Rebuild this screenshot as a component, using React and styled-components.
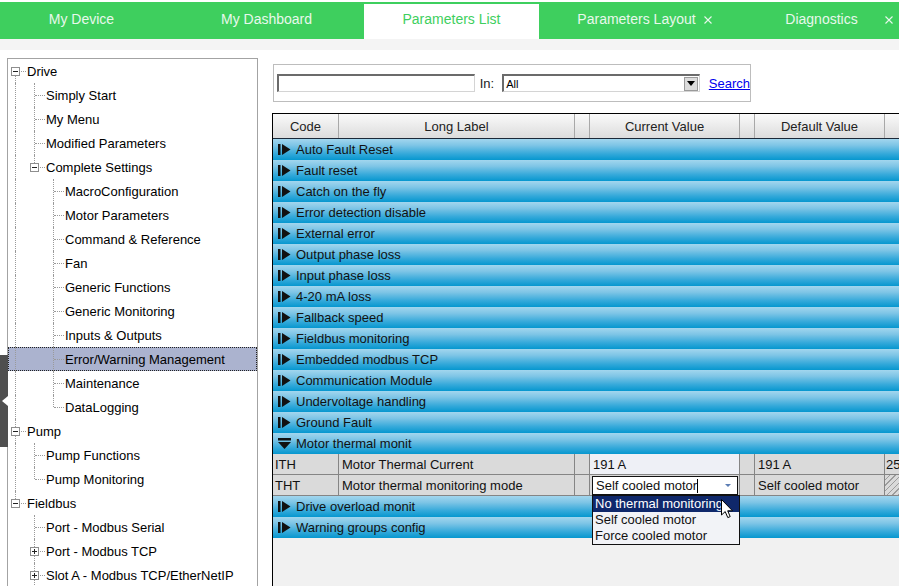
import styled, { createGlobalStyle, css } from "styled-components";

const GREEN = "#3ecf5e";
const COLS = "66px 236px 15px 150px 15px 130px 120px";

const GlobalStyle = createGlobalStyle`
  html, body {
    margin: 0;
    padding: 0;
    overflow: hidden;
    background: #fff;
    font-family: "Liberation Sans", Arial, sans-serif;
  }
  * { box-sizing: border-box; }
`;

const Page = styled.div`
  height: 100vh;
  display: flex;
  flex-direction: column;
`;

const TabBar = styled.div`
  margin-top: 2px;
  height: 37px;
  background: ${GREEN};
  display: flex;
  align-items: flex-end;
  gap: 10px;
  padding-left: 0;
  margin-left: -6px;
  flex-shrink: 0;
`;

const Tab = styled.div`
  flex: 0 0 175px;
  height: 35px;
  padding-bottom: 5px;
  display: flex;
  align-items: center;
  justify-content: center;
  position: relative;
  font-size: 14px;
  color: #e8f8ec;
  ${(p) =>
    p.$active &&
    css`
      background: #fff;
      color: ${GREEN};
    `}
`;

const TabText = styled.span`
  position: relative;
`;

const Close = styled.span`
  position: absolute;
  top: 50%;
  margin-top: -3px;
  display: flex;
  ${(p) =>
    p.$edge
      ? css`
          right: 16px;
          margin-top: -6px;
        `
      : css`
          left: calc(100% + 8px);
        `}
`;

const SubStrip = styled.div`
  height: 11px;
  background: #f4f4f4;
  flex-shrink: 0;
`;

const Body = styled.div`
  flex: 1;
  min-height: 0;
  display: flex;
  padding: 8px 0 0 7px;
  position: relative;
  overflow: hidden;
`;

const Handle = styled.div`
  position: absolute;
  left: 0;
  top: 305px;
  width: 8px;
  height: 92px;
  background: #4f4f4f;
  display: flex;
  align-items: center;
  justify-content: flex-end;
  &::after {
    content: "";
    border-right: 6px solid #fff;
    border-top: 5px solid transparent;
    border-bottom: 5px solid transparent;
  }
`;

const TreePanel = styled.div`
  flex: 0 0 251px;
  border: 1px solid #a3a3a3;
  border-bottom: none;
  background: #fff;
  overflow: hidden;
`;

const TreeRow = styled.div`
  height: 24px;
  display: flex;
  align-items: center;
  font-size: 13px;
  color: #000;
  white-space: nowrap;
  ${(p) =>
    p.$selected &&
    css`
      background: #abb3cf;
      outline: 1px dotted #222;
      outline-offset: -1px;
    `}
`;

const Guide = styled.div`
  flex: 0 0 19px;
  align-self: stretch;
  position: relative;
  &::before {
    content: "";
    position: absolute;
    left: 7px;
    top: ${(p) => (p.$up ? "0" : "12px")};
    bottom: ${(p) => (p.$down ? "0" : "12px")};
    border-left: 1px dotted #9a9a9a;
  }
  &::after {
    content: "";
    position: absolute;
    left: 8px;
    top: 12px;
    width: ${(p) => (p.$branch ? "10px" : "0")};
    border-top: 1px dotted #9a9a9a;
  }
`;

const Expander = styled.span`
  position: absolute;
  left: 3px;
  top: 8px;
  width: 9px;
  height: 9px;
  border: 1px solid #8e8e8e;
  background: #fff;
  z-index: 1;
  &::before {
    content: "";
    position: absolute;
    left: 1px;
    right: 1px;
    top: 3px;
    border-top: 1px solid #222;
  }
  ${(p) =>
    p.$plus &&
    css`
      &::after {
        content: "";
        position: absolute;
        top: 1px;
        bottom: 1px;
        left: 3px;
        border-left: 1px solid #222;
      }
    `}
`;

const RightCol = styled.div`
  flex: 1;
  min-width: 0;
  margin-left: 14px;
  display: flex;
  flex-direction: column;
  overflow: hidden;
`;

const SearchBox = styled.div`
  margin: 6px 0 0 1px;
  width: 478px;
  height: 38px;
  border: 1px solid #bdbdbd;
  display: flex;
  align-items: center;
  padding-left: 3px;
  font-size: 13px;
  flex-shrink: 0;
`;

const TextInput = styled.div`
  width: 198px;
  height: 18px;
  border-top: 2px solid #6b6b6b;
  border-left: 2px solid #6b6b6b;
  border-right: 1px solid #d4d4d4;
  border-bottom: 1px solid #d4d4d4;
  background: #fff;
`;

const InLabel = styled.span`
  margin-left: 5px;
  color: #222;
`;

const Select = styled.div`
  margin-left: 8px;
  width: 198px;
  height: 18px;
  border-top: 2px solid #6b6b6b;
  border-left: 2px solid #6b6b6b;
  border-right: 1px solid #d4d4d4;
  border-bottom: 1px solid #d4d4d4;
  display: flex;
  align-items: center;
  justify-content: space-between;
  font-size: 11px;
  padding-left: 2px;
  padding-right: 1px;
`;

const SelectButton = styled.span`
  width: 14px;
  height: 14px;
  background: #dcdcdc;
  border: 1px solid #9a9a9a;
  display: flex;
  align-items: center;
  justify-content: center;
  &::after {
    content: "";
    border-top: 5px solid #000;
    border-left: 4px solid transparent;
    border-right: 4px solid transparent;
  }
`;

const SearchLink = styled.a`
  margin-left: 9px;
  color: #0000ee;
  text-decoration: underline;
`;

const Table = styled.div`
  margin-top: 11px;
  flex: 1;
  border-top: 1px solid #000;
  border-left: 1px solid #000;
  background: #f1f1f1;
  font-size: 13px;
  color: #111;
  width: 760px;
`;

const HeaderRow = styled.div`
  display: grid;
  grid-template-columns: ${COLS};
  height: 25px;
  border-bottom: 1px solid #1b2838;
`;

const HeaderCell = styled.div`
  background: linear-gradient(#fafafa, #dcdcdc);
  border-right: 1px solid #a8a8a8;
  display: flex;
  align-items: center;
  justify-content: center;
  color: #222;
`;

const GroupRow = styled.div`
  height: 21px;
  display: flex;
  align-items: center;
  gap: 5px;
  padding-left: 5px;
  background: linear-gradient(#a2d6ee 0%, #7ec5e6 30%, #35a9da 70%, #0697cf 100%);
  color: #111;
`;

const ParamRow = styled.div`
  display: grid;
  grid-template-columns: ${COLS};
  height: 21px;
`;

const Cell = styled.div`
  position: relative;
  background: ${(p) => (p.$edit ? "#eef0f6" : "#dadada")};
  border-right: 1px solid #858585;
  border-bottom: 1px solid #858585;
  display: flex;
  align-items: center;
  padding-left: ${(p) => p.$pad ?? 3}px;
  white-space: nowrap;
  overflow: ${(p) => (p.$open ? "visible" : "hidden")};
  ${(p) =>
    p.$hatch &&
    css`
      background: repeating-linear-gradient(135deg, #dadada 0 3px, #9c9c9c 3px 4px);
    `}
`;

const Combo = styled.div`
  position: absolute;
  left: 2px;
  right: 1px;
  top: 1px;
  height: 19px;
  border: 1px solid #111;
  background: #fff;
  display: flex;
  align-items: center;
  padding: 0 6px 0 3px;
`;

const Caret = styled.span`
  display: inline-block;
  width: 1px;
  height: 14px;
  background: #000;
`;

const ComboArrow = styled.span`
  margin-left: auto;
  border-top: 3px solid #5b7db4;
  border-left: 3px solid transparent;
  border-right: 3px solid transparent;
`;

const DropList = styled.div`
  position: absolute;
  left: 2px;
  top: 20px;
  width: 148px;
  border: 1px solid #111;
  background: #f2f3f7;
  z-index: 5;
`;

const DropItem = styled.div`
  height: 16px;
  line-height: 16px;
  padding-left: 2px;
  color: ${(p) => (p.$sel ? "#fff" : "#111")};
  background: ${(p) => (p.$sel ? "#0f286b" : "transparent")};
`;

const Pointer = styled.svg`
  position: absolute;
  left: 128px;
  top: 3px;
`;

const tree = [
  {
    label: "Drive",
    children: [
      { label: "Simply Start" },
      { label: "My Menu" },
      { label: "Modified Parameters" },
      {
        label: "Complete Settings",
        children: [
          { label: "MacroConfiguration" },
          { label: "Motor Parameters" },
          { label: "Command & Reference" },
          { label: "Fan" },
          { label: "Generic Functions" },
          { label: "Generic Monitoring" },
          { label: "Inputs & Outputs" },
          { label: "Error/Warning Management", selected: true },
          { label: "Maintenance" },
          { label: "DataLogging" },
        ],
      },
    ],
  },
  {
    label: "Pump",
    children: [{ label: "Pump Functions" }, { label: "Pump Monitoring" }],
  },
  {
    label: "Fieldbus",
    children: [
      { label: "Port - Modbus Serial" },
      { label: "Port - Modbus TCP", collapsed: true },
      { label: "Slot A - Modbus TCP/EtherNetIP", collapsed: true, more: true },
    ],
  },
];

function flatten(nodes, depth, trail, out) {
  nodes.forEach((n, i) => {
    const last = i === nodes.length - 1 && !n.more;
    const first = depth === 0 && i === 0;
    out.push({ ...n, depth, trail, last, first });
    if (n.children) flatten(n.children, depth + 1, [...trail, !last], out);
  });
  return out;
}

const rows = flatten(tree, 0, [], []);

const groups = [
  "Auto Fault Reset",
  "Fault reset",
  "Catch on the fly",
  "Error detection disable",
  "External error",
  "Output phase loss",
  "Input phase loss",
  "4-20 mA loss",
  "Fallback speed",
  "Fieldbus monitoring",
  "Embedded modbus TCP",
  "Communication Module",
  "Undervoltage handling",
  "Ground Fault",
];

function GroupIcon({ open }) {
  return open ? (
    <svg width="13" height="11" viewBox="0 0 13 11">
      <rect x="0" y="0" width="13" height="2.5" fill="#111" />
      <polygon points="0,4 13,4 6.5,11" fill="#111" />
    </svg>
  ) : (
    <svg width="13" height="11" viewBox="0 0 13 11">
      <rect x="0" y="0" width="2.5" height="11" fill="#111" />
      <polygon points="4,0 12.5,5.5 4,11" fill="#111" />
    </svg>
  );
}

function CloseIcon() {
  return (
    <svg width="8" height="8" viewBox="0 0 8 8">
      <path d="M0.5 0.5 L7.5 7.5 M7.5 0.5 L0.5 7.5" stroke="#e8f8ec" strokeWidth="1.1" />
    </svg>
  );
}

function Tree() {
  return (
    <TreePanel>
      {rows.map((r) => (
        <TreeRow key={r.label} $selected={r.selected}>
          {r.trail.map((through, d) => (
            <Guide key={d} $up={through} $down={through} />
          ))}
          <Guide $up={!r.first} $down={!r.last} $branch>
            {(r.children || r.collapsed) && <Expander $plus={r.collapsed} />}
          </Guide>
          <span>{r.label}</span>
        </TreeRow>
      ))}
    </TreePanel>
  );
}

export default function App() {
  return (
    <Page>
      <GlobalStyle />
      <TabBar>
        <Tab><TabText>My Device</TabText></Tab>
        <Tab><TabText>My Dashboard</TabText></Tab>
        <Tab $active><TabText>Parameters List</TabText></Tab>
        <Tab>
          <TabText>
            Parameters Layout
            <Close><CloseIcon /></Close>
          </TabText>
        </Tab>
        <Tab>
          <TabText>Diagnostics</TabText>
          <Close $edge><CloseIcon /></Close>
        </Tab>
      </TabBar>
      <SubStrip />
      <Body>
        <Handle />
        <Tree />
        <RightCol>
          <SearchBox>
            <TextInput />
            <InLabel>In:</InLabel>
            <Select>
              <span>All</span>
              <SelectButton />
            </Select>
            <SearchLink href="#">Search</SearchLink>
          </SearchBox>
          <Table>
            <HeaderRow>
              <HeaderCell>Code</HeaderCell>
              <HeaderCell>Long Label</HeaderCell>
              <HeaderCell />
              <HeaderCell>Current Value</HeaderCell>
              <HeaderCell />
              <HeaderCell>Default Value</HeaderCell>
              <HeaderCell />
            </HeaderRow>
            {groups.map((g) => (
              <GroupRow key={g}>
                <GroupIcon />
                {g}
              </GroupRow>
            ))}
            <GroupRow>
              <GroupIcon open />
              Motor thermal monit
            </GroupRow>
            <ParamRow>
              <Cell $pad={2}>ITH</Cell>
              <Cell>Motor Thermal Current</Cell>
              <Cell />
              <Cell $edit>191 A</Cell>
              <Cell />
              <Cell>191 A</Cell>
              <Cell $pad={1}>25</Cell>
            </ParamRow>
            <ParamRow>
              <Cell $pad={2}>THT</Cell>
              <Cell>Motor thermal monitoring mode</Cell>
              <Cell />
              <Cell $open>
                <Combo>
                  Self cooled motor
                  <Caret />
                  <ComboArrow />
                </Combo>
                <DropList>
                  <DropItem $sel>No thermal monitoring</DropItem>
                  <DropItem>Self cooled motor</DropItem>
                  <DropItem>Force cooled motor</DropItem>
                  <Pointer width="13" height="20" viewBox="0 0 13 20">
                    <path
                      d="M0.5 0.5 L0.5 16 L4.2 12.6 L6.8 18.6 L9.2 17.6 L6.7 11.8 L11.5 11.8 Z"
                      fill="#fff"
                      stroke="#000"
                      strokeWidth="1"
                    />
                  </Pointer>
                </DropList>
              </Cell>
              <Cell />
              <Cell>Self cooled motor</Cell>
              <Cell $hatch />
            </ParamRow>
            <GroupRow>
              <GroupIcon />
              Drive overload monit
            </GroupRow>
            <GroupRow>
              <GroupIcon />
              Warning groups config
            </GroupRow>
          </Table>
        </RightCol>
      </Body>
    </Page>
  );
}
